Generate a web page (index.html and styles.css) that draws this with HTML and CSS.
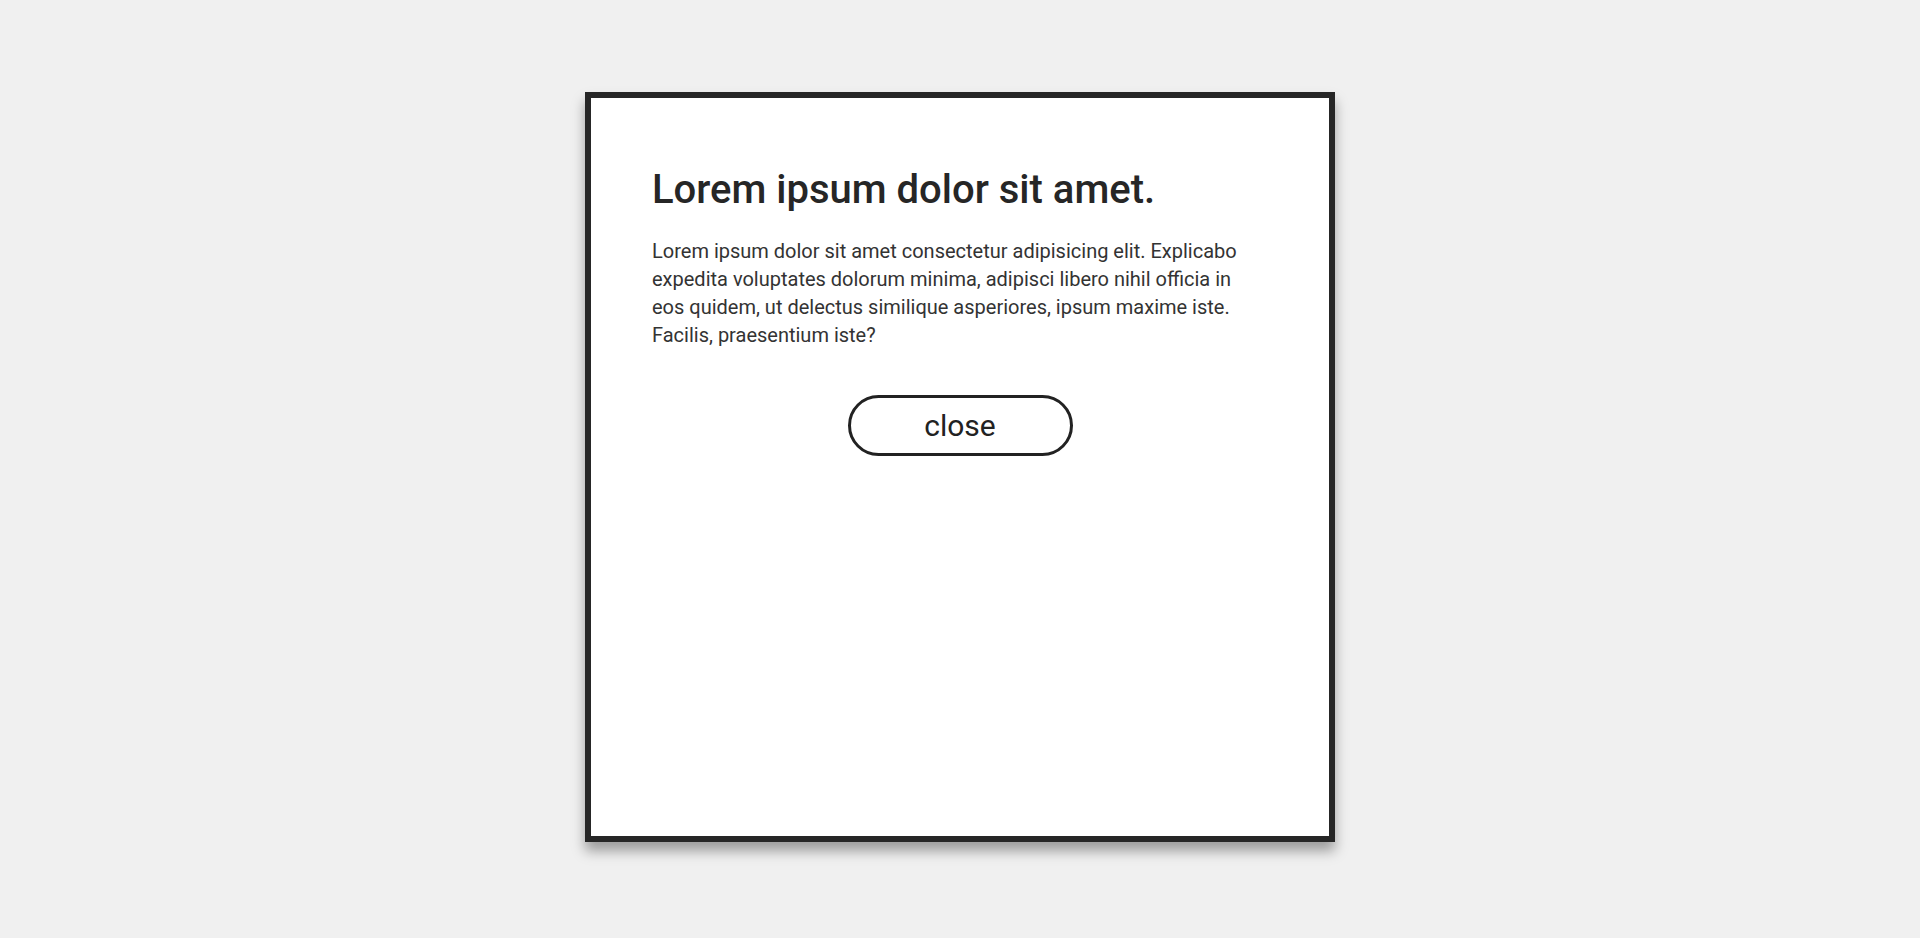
FILE: index.html
```html
<!DOCTYPE html>
<html lang="en">
<head>
<meta charset="utf-8">
<title>Modal</title>
<link rel="stylesheet" href="styles.css">
</head>
<body>
<div class="page">
  <div class="modal">
    <h1 class="modal-title">Lorem ipsum dolor sit amet.</h1>
    <p class="modal-text">Lorem ipsum dolor sit amet consectetur adipisicing elit. Explicabo expedita voluptates dolorum minima, adipisci libero nihil officia in eos quidem, ut delectus similique asperiores, ipsum maxime iste. Facilis, praesentium iste?</p>
    <div class="modal-actions">
      <button class="close-btn">close</button>
    </div>
  </div>
</div>
</body>
</html>
```
FILE: styles.css
```css
html, body {
  margin: 0;
  padding: 0;
  height: 100%;
}
body {
  background: #f0f0f0;
  font-family: Roboto, "Liberation Sans", sans-serif;
  color: #222;
}
.page {
  padding-top: 92px;
  display: flex;
  justify-content: center;
}
.modal {
  box-sizing: border-box;
  width: 750px;
  height: 750px;
  background: #fff;
  border: 6px solid #262626;
  box-shadow: 0 9px 12px rgba(0,0,0,0.35);
  padding: 68px 61px;
}
.modal-title {
  margin: 0;
  font-size: 40px;
  font-weight: 500;
  line-height: 48px;
  color: #262626;
}
.modal-text {
  margin: 23px 0 0;
  font-size: 20px;
  line-height: 28px;
  color: #333;
}
.modal-actions {
  display: flex;
  justify-content: center;
  margin-top: 46px;
}
.close-btn {
  box-sizing: border-box;
  width: 225px;
  height: 61px;
  border: 3px solid #222;
  border-radius: 31px;
  background: #fff;
  font-family: Roboto, "Liberation Sans", sans-serif;
  font-size: 30px;
  color: #222;
  padding: 0;
}
```
